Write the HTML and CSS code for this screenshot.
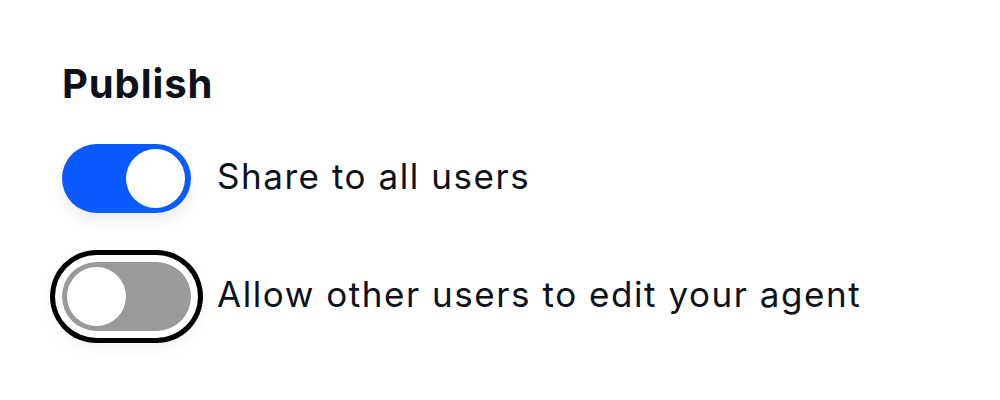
FILE: index.html
```html
<!DOCTYPE html>
<html lang="en">
<head>
<meta charset="utf-8">
<title>Publish</title>
<link rel="stylesheet" href="styles.css">
</head>
<body>
<section class="publish">
  <h2 class="title">Publish</h2>
  <div class="options">
    <label class="row">
      <span class="switch switch-on" role="switch" aria-checked="true"><span class="knob"></span></span>
      <span class="label">Share to all users</span>
    </label>
    <label class="row">
      <span class="switch switch-off switch-focus" role="switch" aria-checked="false"><span class="knob"></span></span>
      <span class="label">Allow other users to edit your agent</span>
    </label>
  </div>
</section>
</body>
</html>
```
FILE: styles.css
```css
html, body {
  margin: 0;
  padding: 0;
  background: #ffffff;
}

body {
  width: 1000px;
  height: 400px;
  overflow: hidden;
  font-family: Inter, "Liberation Sans", sans-serif;
  color: #0d111a;
}

.publish {
  padding: 60px 0 0 62px;
}

.title {
  margin: 0;
  font-size: 40px;
  line-height: 48px;
  font-weight: 700;
  letter-spacing: 0.9px;
}

.options {
  margin-top: 36px;
  display: flex;
  flex-direction: column;
  gap: 49px;
}

.row {
  display: flex;
  align-items: center;
  gap: 26px;
}

.switch {
  box-sizing: border-box;
  flex: none;
  width: 129px;
  height: 69px;
  padding: 5px;
  border-radius: 35px;
  display: flex;
}

.switch-on {
  background: #0a5bff;
  justify-content: flex-end;
  padding-right: 6px;
  box-shadow: 0 8px 14px rgba(0, 0, 0, 0.07);
}

.switch-off {
  background: #9a9a9a;
  justify-content: flex-start;
}

.switch-focus {
  box-shadow: 0 0 0 7px #ffffff, 0 0 0 12px #000000, 0 6px 16px 10px rgba(0, 0, 0, 0.05);
}

.knob {
  width: 59px;
  height: 59px;
  border-radius: 50%;
  background: #ffffff;
}

.label {
  font-size: 35px;
  line-height: 40px;
  padding-bottom: 6px;
  font-weight: 400;
  letter-spacing: 1.55px;
}
```
